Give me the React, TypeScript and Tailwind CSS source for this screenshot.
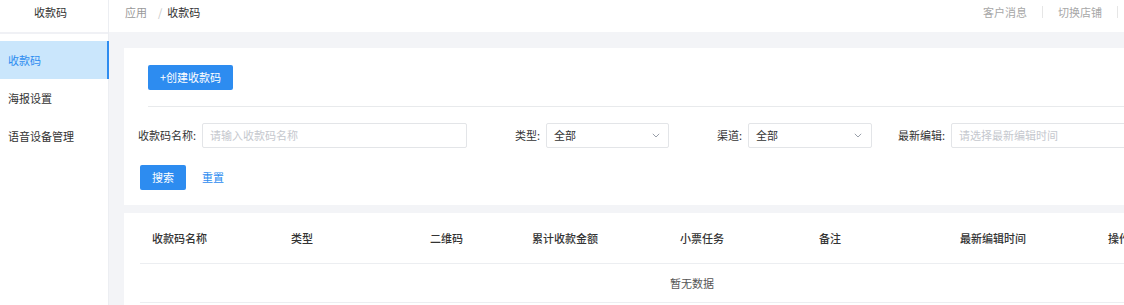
import React from "react";

const font = { fontFamily: '"Noto Sans CJK SC", "Noto Sans", sans-serif' };

function Chevron() {
  return (
    <svg width="8" height="5" viewBox="0 0 8 5" fill="none">
      <path d="M0.8 0.8 L4 4 L7.2 0.8" stroke="#9aa0aa" strokeWidth="1" />
    </svg>
  );
}

function Label({ text, w }: { text: string; w: string }) {
  return <div className={`${w} shrink-0 text-right pr-[6px] text-[11px] text-[#333]`}>{text}</div>;
}

export default function App() {
  const cols: { t: string; w: string }[] = [
    { t: "收款码名称", w: "w-[139px]" },
    { t: "类型", w: "w-[139px]" },
    { t: "二维码", w: "w-[102px]" },
    { t: "累计收款金额", w: "w-[148px]" },
    { t: "小票任务", w: "w-[139px]" },
    { t: "备注", w: "w-[141px]" },
    { t: "最新编辑时间", w: "w-[148px]" },
    { t: "操作", w: "w-[120px]" },
  ];
  return (
    <div className="w-[1124px] h-[305px] overflow-hidden bg-white" style={font}>
      <div className="flex w-[1275px] h-full">
        {/* Sidebar */}
        <div className="w-[109px] shrink-0 flex flex-col bg-white border-r border-[#eceef2]">
          <div className="h-[34px] pl-[34px] pt-[4px] text-[11px] leading-[16px] text-[#333] border-b-2 border-[#f0f1f5]">
            收款码
          </div>
          <div className="mt-[7px] flex flex-col">
            <div className="h-[38px] flex items-center pl-[8px] text-[11px] text-[#2d8cf0] bg-[#cae6fc] border-r-2 border-[#2d8cf0] -mr-px">
              收款码
            </div>
            <div className="h-[38px] flex items-center pl-[8px] text-[11px] text-[#333]">海报设置</div>
            <div className="h-[38px] flex items-center pl-[8px] text-[11px] text-[#333]">语音设备管理</div>
          </div>
        </div>

        {/* Main */}
        <div className="flex-1 flex flex-col bg-[#f3f4f7]">
          <div className="h-[32px] shrink-0 bg-white flex justify-between pt-[4px] pl-[16px] pr-[157px] text-[11px] leading-[16px]">
            <div className="flex">
              <span className="text-[#999]">应用</span>
              <span className="text-[#c8c8c8] ml-[11px] mr-[5px]">/</span>
              <span className="text-[#333]">收款码</span>
            </div>
            <div className="flex text-[#a7a7a7]">
              <span className="px-[15px]">客户消息</span>
              <span className="w-px h-[12px] mt-[2px] bg-[#e6e6e6]" />
              <span className="px-[15px]">切换店铺</span>
              <span className="w-px h-[12px] mt-[2px] bg-[#e6e6e6]" />
            </div>
          </div>

          <div className="flex-1 pl-[15px] pr-[15px] pt-[16px] flex flex-col gap-[8px]">
            {/* Card 1 */}
            <div className="bg-white pt-[15px] pb-[15px]">
              <div className="pl-[24px]">
                <button className="h-[25px] w-[85px] rounded-[2px] bg-[#2d8cf0] text-white text-[11px]">
                  +创建收款码
                </button>
                <div className="mt-[16px] h-px bg-[#e8eaec]" />
              </div>
              <div className="mt-[16px] flex items-center h-[25px]">
                <Label text="收款码名称:" w="w-[78px]" />
                <div className="w-[265px] h-[25px] border border-[#e3e5e8] rounded-[2px] flex items-center pl-[7px] text-[11px] text-[#c5c8ce]">
                  请输入收款码名称
                </div>
                <Label text="类型:" w="w-[79px]" />
                <div className="w-[123px] h-[25px] border border-[#e3e5e8] rounded-[2px] flex items-center justify-between pl-[7px] pr-[8px] text-[11px] text-[#333]">
                  <span>全部</span>
                  <Chevron />
                </div>
                <Label text="渠道:" w="w-[79px]" />
                <div className="w-[124px] h-[25px] border border-[#e3e5e8] rounded-[2px] flex items-center justify-between pl-[7px] pr-[9px] text-[11px] text-[#333]">
                  <span>全部</span>
                  <Chevron />
                </div>
                <Label text="最新编辑:" w="w-[79px]" />
                <div className="w-[265px] h-[25px] border border-[#e3e5e8] rounded-[2px] flex items-center pl-[7px] text-[11px] text-[#c5c8ce]">
                  请选择最新编辑时间
                </div>
              </div>
              <div className="mt-[17px] pl-[16px] flex items-center">
                <button className="h-[25px] w-[46px] rounded-[2px] bg-[#2d8cf0] text-white text-[11px]">搜索</button>
                <span className="ml-[16px] text-[11px] text-[#2d8cf0]">重置</span>
              </div>
            </div>

            {/* Card 2 */}
            <div className="bg-white px-[16px] pb-[10px]">
              <div className="flex h-[51px] items-center border-b border-[#eceef1]">
                {cols.map((c) => (
                  <div key={c.t} className={`${c.w} shrink-0 pl-[12px] text-[11px] font-medium text-[#333]`}>
                    {c.t}
                  </div>
                ))}
              </div>
              <div className="h-[39px] flex items-center justify-center border-b border-[#eceef1] text-[11px] text-[#555]">
                暂无数据
              </div>
            </div>
          </div>
        </div>
      </div>
    </div>
  );
}
